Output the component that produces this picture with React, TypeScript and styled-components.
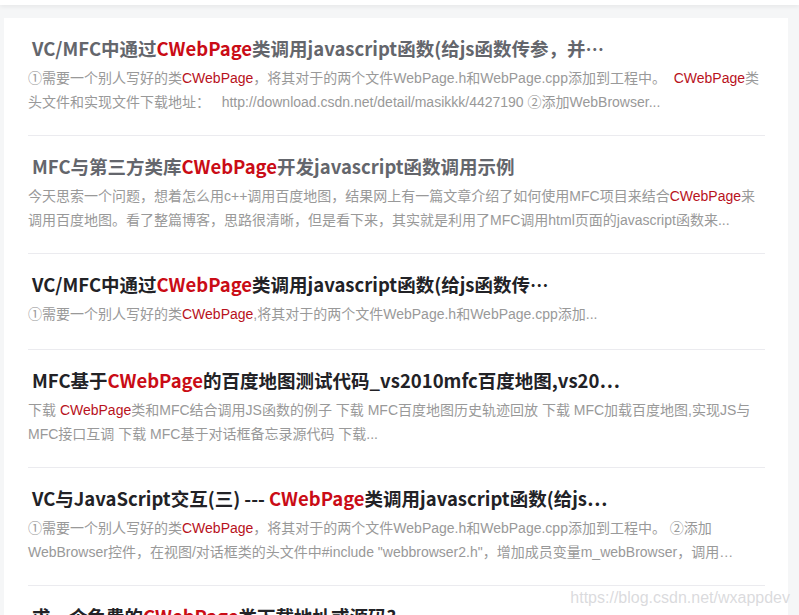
import React from "react";
import styled, { createGlobalStyle } from "styled-components";

const Global = createGlobalStyle`
  html, body { margin: 0; padding: 0; background: #f5f6f7; }
  body { font-family: "Liberation Sans", "Noto Sans CJK SC", sans-serif; overflow: hidden; }
`;

const Header = styled.div`
  height: 5px;
  background: #fff;
  box-shadow: 0 2px 4px rgba(0, 0, 0, 0.06);
`;

const Main = styled.main`
  position: relative;
  padding: 13px 11px 0 4px;
`;

const Card = styled.section`
  background: #fff;
  padding: 0 23px 0 24px;
`;

const Item = styled.article<{ $single?: boolean }>`
  padding: 18px 0 ${(p) => (p.$single ? "23px" : "21px")};
  border-bottom: 1px solid #ebebef;
  display: flex;
  flex-direction: column;
  gap: 6px;
`;

const Title = styled.h4<{ $visited?: boolean }>`
  margin: 0;
  padding-left: 4px;
  font-family: "Noto Sans CJK SC", "Liberation Sans", sans-serif;
  font-size: 18.5px;
  font-weight: 700;
  line-height: 24px;
  white-space: nowrap;
  color: ${(p) => (p.$visited ? "#64666c" : "#222226")};
`;

const Desc = styled.div`
  font-family: "Liberation Sans", "Noto Sans CJK SC", sans-serif;
  font-size: 14px;
  line-height: 24px;
  color: #999999;
`;

const Line = styled.div`
  white-space: pre;
`;

const TitleEm = styled.em`
  font-style: normal;
  color: #ca0c16;
`;

const DescEm = styled.em`
  font-style: normal;
  color: #b8121c;
`;

const Watermark = styled.div`
  position: absolute;
  right: 9px;
  top: 584px;
  font-family: "Liberation Sans", sans-serif;
  font-size: 16px;
  color: rgba(212, 212, 215, 0.85);
  text-shadow: 0 0 1px rgba(255, 255, 255, 0.9);
  pointer-events: none;
`;

const KEY = "CWebPage";

function mark(text: string, Em: typeof TitleEm) {
  const parts = text.split(KEY);
  const out: React.ReactNode[] = [];
  parts.forEach((p, i) => {
    if (i > 0) out.push(<Em key={"e" + i}>{KEY}</Em>);
    if (p) out.push(<React.Fragment key={"t" + i}>{p}</React.Fragment>);
  });
  return out;
}

type Entry = { title: string; visited?: boolean; lines: string[] };

const entries: Entry[] = [
  {
    title: "VC/MFC中通过CWebPage类调用javascript函数(给js函数传参，并…",
    visited: true,
    lines: [
      "①需要一个别人写好的类CWebPage，将其对于的两个文件WebPage.h和WebPage.cpp添加到工程中。  CWebPage类",
      "头文件和实现文件下载地址：   http://download.csdn.net/detail/masikkk/4427190 ②添加WebBrowser...",
    ],
  },
  {
    title: "MFC与第三方类库CWebPage开发javascript函数调用示例",
    visited: true,
    lines: [
      "今天思索一个问题，想着怎么用c++调用百度地图，结果网上有一篇文章介绍了如何使用MFC项目来结合CWebPage来",
      "调用百度地图。看了整篇博客，思路很清晰，但是看下来，其实就是利用了MFC调用html页面的javascript函数来...",
    ],
  },
  {
    title: "VC/MFC中通过CWebPage类调用javascript函数(给js函数传…",
    lines: ["①需要一个别人写好的类CWebPage,将其对于的两个文件WebPage.h和WebPage.cpp添加..."],
  },
  {
    title: "MFC基于CWebPage的百度地图测试代码_vs2010mfc百度地图,vs20…",
    lines: [
      "下载 CWebPage类和MFC结合调用JS函数的例子 下载 MFC百度地图历史轨迹回放 下载 MFC加载百度地图,实现JS与",
      "MFC接口互调 下载 MFC基于对话框备忘录源代码 下载...",
    ],
  },
  {
    title: "VC与JavaScript交互(三) --- CWebPage类调用javascript函数(给js…",
    lines: [
      "①需要一个别人写好的类CWebPage，将其对于的两个文件WebPage.h和WebPage.cpp添加到工程中。 ②添加",
      "WebBrowser控件，在视图/对话框类的头文件中#include \"webbrowser2.h\"，增加成员变量m_webBrowser，调用…",
    ],
  },
  {
    title: "求一个免费的CWebPage类下载地址或源码?",
    lines: ["求一个免费的CWebPage类下载地址或源码"],
  },
];

export default function App() {
  return (
    <>
      <Global />
      <Header />
      <Main>
        <Card>
          {entries.map((e, i) => (
            <Item key={i} $single={e.lines.length === 1}>
              <Title $visited={e.visited}>{mark(e.title, TitleEm)}</Title>
              <Desc>
                {e.lines.map((l, j) => (
                  <Line key={j}>{mark(l, DescEm)}</Line>
                ))}
              </Desc>
            </Item>
          ))}
        </Card>
        <Watermark>https://blog.csdn.net/wxappdev</Watermark>
      </Main>
    </>
  );
}
